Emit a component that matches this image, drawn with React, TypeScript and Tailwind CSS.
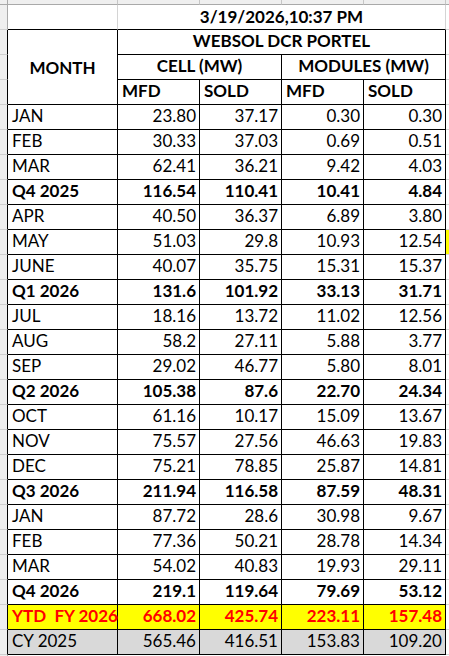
type Row = { m: string; v: string[]; kind?: "q" | "ytd" | "cy"; flag?: boolean };

const rows: Row[] = [
  { m: "JAN", v: ["23.80", "37.17", "0.30", "0.30"] },
  { m: "FEB", v: ["30.33", "37.03", "0.69", "0.51"] },
  { m: "MAR", v: ["62.41", "36.21", "9.42", "4.03"] },
  { m: "Q4 2025", v: ["116.54", "110.41", "10.41", "4.84"], kind: "q" },
  { m: "APR", v: ["40.50", "36.37", "6.89", "3.80"] },
  { m: "MAY", v: ["51.03", "29.8", "10.93", "12.54"], flag: true },
  { m: "JUNE", v: ["40.07", "35.75", "15.31", "15.37"] },
  { m: "Q1 2026", v: ["131.6", "101.92", "33.13", "31.71"], kind: "q" },
  { m: "JUL", v: ["18.16", "13.72", "11.02", "12.56"] },
  { m: "AUG", v: ["58.2", "27.11", "5.88", "3.77"] },
  { m: "SEP", v: ["29.02", "46.77", "5.80", "8.01"] },
  { m: "Q2 2026", v: ["105.38", "87.6", "22.70", "24.34"], kind: "q" },
  { m: "OCT", v: ["61.16", "10.17", "15.09", "13.67"] },
  { m: "NOV", v: ["75.57", "27.56", "46.63", "19.83"] },
  { m: "DEC", v: ["75.21", "78.85", "25.87", "14.81"] },
  { m: "Q3 2026", v: ["211.94", "116.58", "87.59", "48.31"], kind: "q" },
  { m: "JAN", v: ["87.72", "28.6", "30.98", "9.67"] },
  { m: "FEB", v: ["77.36", "50.21", "28.78", "14.34"] },
  { m: "MAR", v: ["54.02", "40.83", "19.93", "29.11"] },
  { m: "Q4 2026", v: ["219.1", "119.64", "79.69", "53.12"], kind: "q" },
  { m: "YTD  FY 2026", v: ["668.02", "425.74", "223.11", "157.48"], kind: "ytd" },
  { m: "CY 2025", v: ["565.46", "416.51", "153.83", "109.20"], kind: "cy" },
];

const strip = "bg-[#efefef] border-b border-b-[#d0d0d0] border-r";
const cell = "flex items-end border-r border-b border-black leading-[20px] pb-[3px] whitespace-pre";

function rowStyle(kind?: string) {
  if (kind === "q") return "font-bold text-black";
  if (kind === "ytd") return "font-bold text-[#ff0000] bg-[#ffff00]";
  if (kind === "cy") return "text-black bg-[#d9d9d9]";
  return "text-black";
}

export default function App() {
  return (
    <div className="w-[449px] h-[656px] overflow-hidden bg-white font-['Lato',sans-serif] text-[17px] text-black">
      <div className="grid grid-cols-[8px_110px_82px_82px_82px_82px_1fr] grid-rows-[5px_repeat(26,25px)_1fr] h-full">
        {/* top band */}
        <div className="bg-[#efefef] border-b border-r border-[#a9a9a9]" />
        {[0, 1, 2, 3, 4].map((i) => (
          <div key={i} className="bg-[#efefef] border-b border-b-[#a9a9a9] border-r border-r-[#c6c6c6]" />
        ))}
        <div className="bg-[#efefef] border-b border-b-[#a9a9a9]" />

        {/* row 1 */}
        <div className={`${strip} border-r-[#a9a9a9]`} />
        <div className="border-r border-r-[#d4d4d4] border-b border-b-black" />
        <div className="col-span-4 flex items-end justify-center border-r border-r-[#d4d4d4] border-b border-b-black font-bold leading-[20px] pb-[2px]">
          3/19/2026,10:37 PM
        </div>
        <div className="border-b border-b-[#d4d4d4]" />

        {/* header rows 2-4 */}
        <div className={`${strip} border-r-black row-span-1`} />
        <div className="row-span-3 flex items-center justify-center border-r border-b border-black font-bold pt-[2px]">
          MONTH
        </div>
        <div className={`${cell} col-span-4 justify-center font-bold pb-[2px]`}>WEBSOL DCR PORTEL</div>
        <div className="border-b border-b-[#d4d4d4]" />

        <div className={`${strip} border-r-black`} />
        <div className={`${cell} col-span-2 justify-center font-bold pb-[2px]`}>CELL (MW)</div>
        <div className={`${cell} col-span-2 justify-center font-bold pb-[2px]`}>MODULES (MW)</div>
        <div className="border-b border-b-[#d4d4d4]" />

        <div className={`${strip} border-r-black`} />
        {["MFD", "SOLD", "MFD", "SOLD"].map((h, i) => (
          <div key={i} className={`${cell} pl-[4px] font-bold pb-[2px]`}>
            {h}
          </div>
        ))}
        <div className="border-b border-b-[#d4d4d4]" />

        {/* data rows */}
        {rows.map((r, i) => (
          <div key={i} className="contents">
            <div className={`${strip} border-r-black`} />
            <div className={`${cell} pl-[4px] ${rowStyle(r.kind)}`}>{r.m}</div>
            {r.v.map((v, j) => (
              <div key={j} className={`${cell} justify-end pr-[3px] ${rowStyle(r.kind)}`}>
                {v}
              </div>
            ))}
            <div className={`border-b border-b-[#d4d4d4] ${r.flag ? "bg-[#ffff00]" : ""}`} />
          </div>
        ))}

        {/* bottom filler */}
        <div className="bg-[#efefef] border-r border-r-[#a9a9a9]" />
        <div className="col-span-6" />
      </div>
    </div>
  );
}
